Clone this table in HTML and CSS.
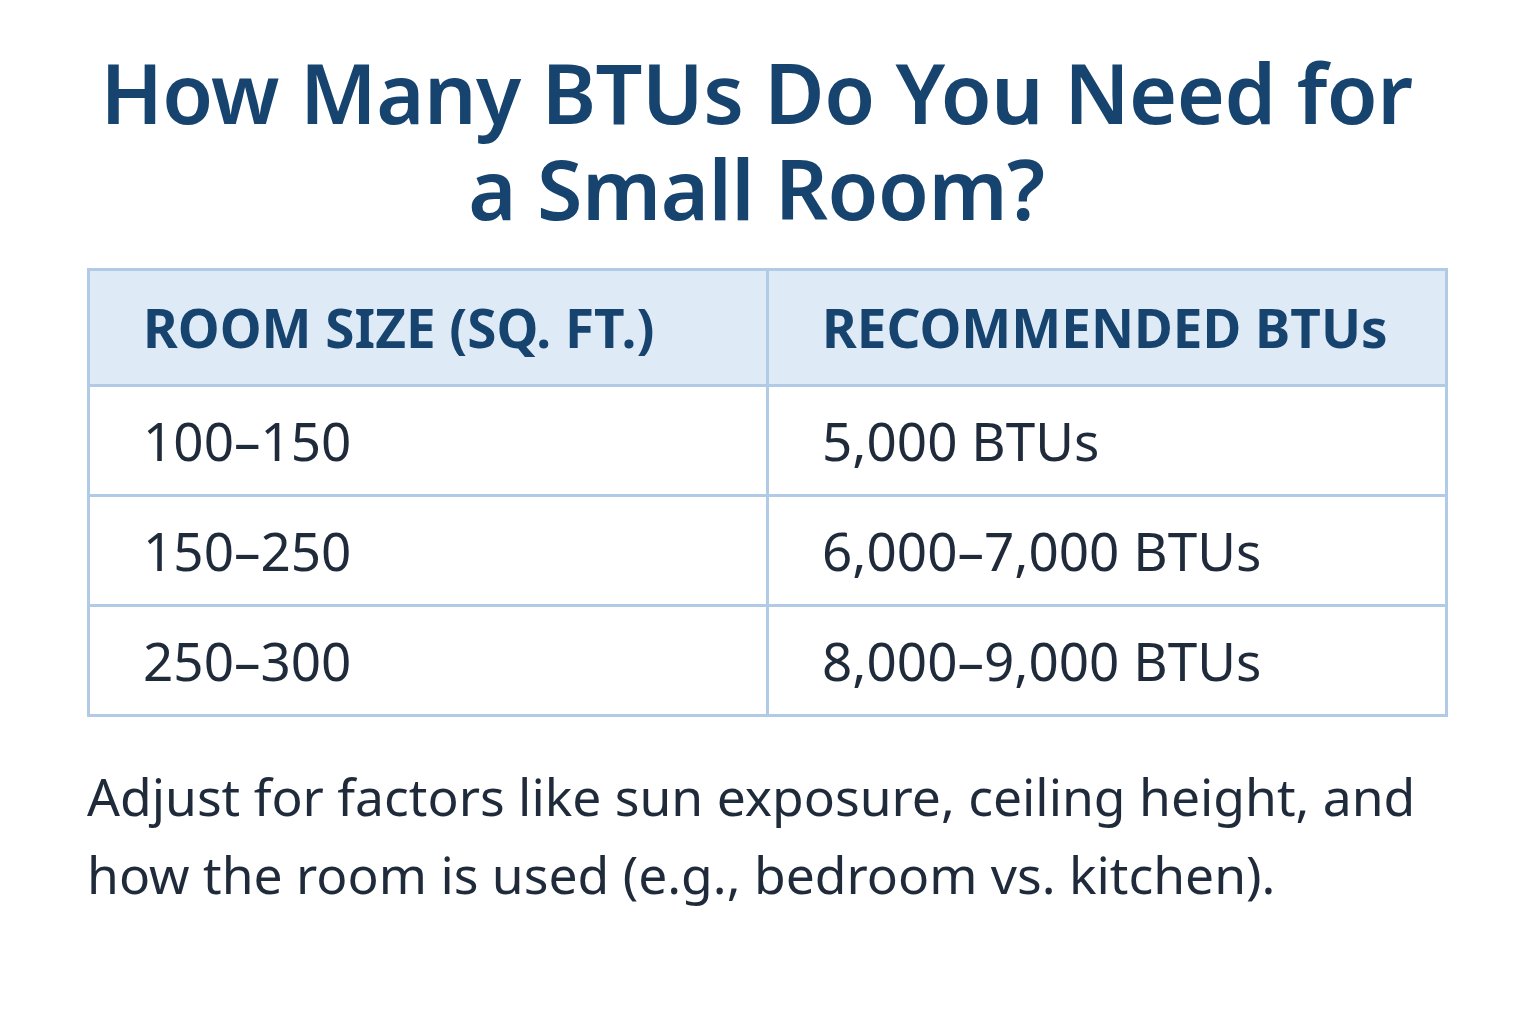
FILE: index.html
```html
<!DOCTYPE html>
<html lang="en">
<head>
<meta charset="utf-8">
<title>How Many BTUs Do You Need for a Small Room?</title>
<link rel="stylesheet" href="styles.css">
</head>
<body>
<main class="page">
  <h1 class="title">How Many BTUs Do You Need for a Small Room?</h1>
  <table class="btu-table">
    <thead>
      <tr><th>ROOM SIZE (SQ. FT.)</th><th>RECOMMENDED BTUs</th></tr>
    </thead>
    <tbody>
      <tr><td>100–150</td><td>5,000 BTUs</td></tr>
      <tr><td>150–250</td><td>6,000–7,000 BTUs</td></tr>
      <tr><td>250–300</td><td>8,000–9,000 BTUs</td></tr>
    </tbody>
  </table>
  <p class="note">Adjust for factors like sun exposure, ceiling height, and how the room is used (e.g., bedroom vs. kitchen).</p>
</main>
</body>
</html>
```

FILE: styles.css
```css
html, body {
  margin: 0;
  padding: 0;
  background: #ffffff;
}
body {
  font-family: "Noto Sans", "Open Sans", sans-serif;
  color: #1f2b3b;
}
.page {
  width: 1361px;
  margin-left: 87px;
  padding-top: 44px;
}
.title {
  margin: 0;
  padding-right: 22px;
  font-size: 82.5px;
  line-height: 96px;
  font-weight: 600;
  color: #17446f;
  text-align: center;
  letter-spacing: -0.5px;
}
.btu-table {
  margin-top: 32px;
  width: 1361px;
  border-collapse: collapse;
  table-layout: fixed;
  border: 3px solid #b1cbe6;
}
.btu-table th,
.btu-table td {
  border: 3px solid #b1cbe6;
  text-align: left;
  padding: 0 0 0 53px;
}
.btu-table th:first-child,
.btu-table td:first-child {
  width: 623px;
}
.btu-table th {
  height: 113px;
  background: #deebf7;
  color: #17446f;
  font-size: 53px;
  font-weight: 700;
  letter-spacing: 0px;
}
.btu-table td {
  height: 107px;
  font-size: 53px;
  font-weight: 400;
  color: #1f2b3b;
}
.note {
  margin: 40px 0 0 0;
  font-size: 51.6px;
  line-height: 78px;
  font-weight: 400;
  color: #1f2b3b;
}
```
